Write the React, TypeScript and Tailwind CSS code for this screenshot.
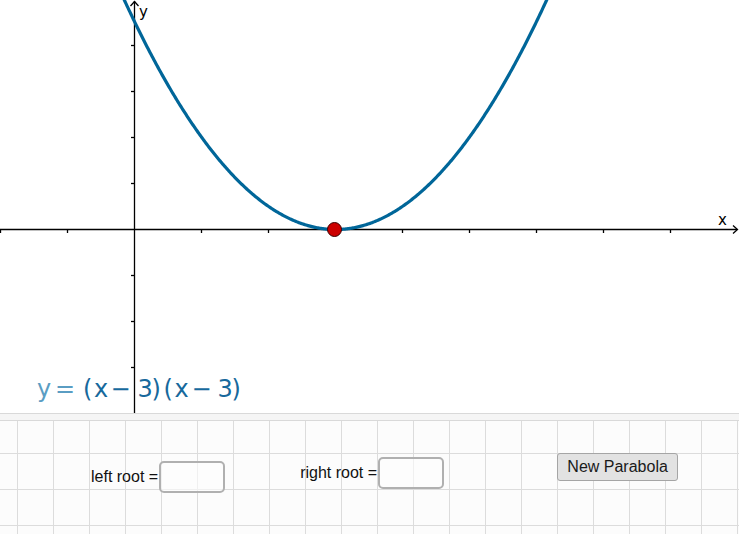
import { useMemo } from "react";

const X0 = 134.5;
const Y0 = 229.5;
const UX = 67;
const UY = 23.1;

const xTicks = [-2, -1, 1, 2, 3, 4, 5, 6, 7, 8];
const yTicks = [-6, -4, -2, 2, 4, 6, 8];

const Graph = () => {
  const curve = useMemo(() => {
    const pts: string[] = [];
    for (let px = 115; px <= 560; px += 1) {
      const x = (px - X0) / UX;
      const py = Y0 - UY * (x - 3) * (x - 3);
      pts.push(`${px},${py.toFixed(2)}`);
    }
    return "M" + pts.join(" L");
  }, []);

  return (
    <svg width="739" height="413" className="block" viewBox="0 0 739 413">
      {/* equation label */}
      <text
        y="397"
        fontSize="24"
        style={{ fontFamily: '"DejaVu Sans", sans-serif' }}
      >
        <tspan x="37" fill="#5a9dc3">y</tspan>
        <tspan x="55" fill="#5a9dc3">=</tspan>
        <tspan x="83" fill="#17699c">(</tspan>
        <tspan x="94" fill="#17699c">x</tspan>
        <tspan x="110.5" fill="#17699c">−</tspan>
        <tspan x="137.5" fill="#17699c">3</tspan>
        <tspan x="151.5" fill="#17699c">)</tspan>
        <tspan x="163.5" fill="#17699c">(</tspan>
        <tspan x="174.5" fill="#17699c">x</tspan>
        <tspan x="191.5" fill="#17699c">−</tspan>
        <tspan x="217.5" fill="#17699c">3</tspan>
        <tspan x="231.5" fill="#17699c">)</tspan>
      </text>

      {/* axes */}
      <g stroke="#000" strokeWidth="1.3" fill="none">
        <line x1="0" y1={Y0} x2="737" y2={Y0} />
        <polyline points={`733,${Y0 - 4} 737.5,${Y0} 733,${Y0 + 4}`} />
        <line x1={X0} y1="413" x2={X0} y2="1" />
        <polyline points={`${X0 - 4},6 ${X0},1.5 ${X0 + 4},6`} />
        {xTicks.map((t) => (
          <line key={"x" + t} x1={X0 + t * UX} y1={Y0} x2={X0 + t * UX} y2={Y0 + 3.5} />
        ))}
        {yTicks.map((t) => (
          <line key={"y" + t} x1={X0 - 3.5} y1={Y0 - (t / 2) * 46} x2={X0} y2={Y0 - (t / 2) * 46} />
        ))}
      </g>
      <text
        x="718"
        y="225"
        fontSize="15"
        fill="#000"
        style={{ fontFamily: '"DejaVu Sans", sans-serif' }}
      >
        x
      </text>
      <text
        x="139"
        y="17"
        fontSize="15"
        fill="#000"
        style={{ fontFamily: '"DejaVu Sans", sans-serif' }}
      >
        y
      </text>

      {/* parabola */}
      <path d={curve} stroke="#006699" strokeWidth="3.2" fill="none" strokeLinejoin="round" />

      {/* vertex point */}
      <circle cx="334.5" cy={Y0} r="7" fill="#cc0000" stroke="#3a0000" strokeWidth="1" />
    </svg>
  );
};

const RootField = ({ label }: { label: string }) => (
  <div className="flex items-center gap-[1px]">
    <span className="text-[16px] text-[#111]">{label}</span>
    <input
      type="text"
      className="w-[66px] h-[32px] rounded-[5px] border-2 border-[#b0b0b0] bg-[#fdfdfd]/60 outline-none px-1"
    />
  </div>
);

export default function App() {
  return (
    <div
      className="w-[739px] h-[534px] overflow-hidden bg-white"
      style={{ fontFamily: '"Liberation Sans", Arial, sans-serif' }}
    >
      <Graph />

      <div className="h-[8px] border-y border-[#d9d9d9] bg-[#f5f5f5]" />
      <div className="h-[113px] bg-[#fcfcfc] bg-[linear-gradient(to_right,#dcdcdc_1px,transparent_1px),linear-gradient(to_bottom,#dcdcdc_1px,transparent_1px)] bg-[size:36px_36px] bg-[position:17px_32px]">
        <div className="flex items-start pl-[91px]">
          <div className="mt-[40px]">
            <RootField label="left root =" />
          </div>
          <div className="mt-[36px] ml-[75px]">
            <RootField label="right root =" />
          </div>
          <button className="mt-[32px] ml-[113px] w-[121px] h-[28px] rounded-[3px] border border-[#a5a5a5] bg-[#e2e2e2] text-[16px] text-[#1a1a1a] leading-none">
            New Parabola
          </button>
        </div>
      </div>
    </div>
  );
}
